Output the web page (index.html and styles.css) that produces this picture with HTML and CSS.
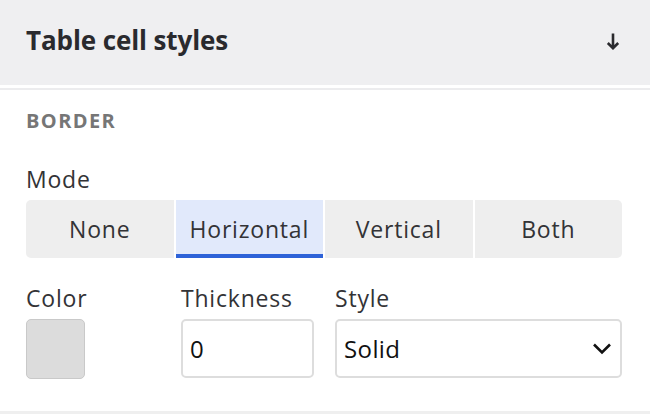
FILE: index.html
```html
<!DOCTYPE html>
<html>
<head>
<meta charset="utf-8">
<link rel="stylesheet" href="styles.css">
</head>
<body>
<div class="panel">
  <div class="header">
    <div class="title">Table cell styles</div>
    <svg class="arrow" width="14" height="17" viewBox="0 0 14 17"><path d="M7 0.5V15.2M1.8 10L7 15.2L12.2 10" fill="none" stroke="#2a2a2e" stroke-width="2.6"/></svg>
  </div>
  <div class="divider"></div>
  <div class="section">
    <div class="section-title">BORDER</div>
    <div class="label mode-label">Mode</div>
    <div class="segments">
      <div class="seg">None</div>
      <div class="seg active">Horizontal</div>
      <div class="seg">Vertical</div>
      <div class="seg">Both</div>
    </div>
    <div class="fields">
      <div class="field f-color">
        <div class="label">Color</div>
        <div class="swatch"></div>
      </div>
      <div class="field f-thick">
        <div class="label">Thickness</div>
        <div class="input">0</div>
      </div>
      <div class="field f-style">
        <div class="label">Style</div>
        <div class="input select"><span>Solid</span><svg width="20" height="13" viewBox="0 0 20 13"><path d="M2 2.5L10 10.5L18 2.5" fill="none" stroke="#111" stroke-width="2.6"/></svg></div>
      </div>
    </div>
  </div>
  <div class="bottom-line"></div>
</div>
</body>
</html>
```

FILE: styles.css
```css
html, body {
  margin: 0;
  padding: 0;
  background: #ffffff;
}
body {
  font-family: "Open Sans", "Noto Sans", sans-serif;
  color: #333336;
  width: 650px;
  height: 414px;
  overflow: hidden;
}
.panel {
  display: flex;
  flex-direction: column;
  height: 414px;
}
.header {
  height: 85px;
  background: #efeff1;
  display: flex;
  align-items: flex-start;
  justify-content: space-between;
  padding: 24px 30px 0 26px;
  box-sizing: border-box;
}
.title {
  font-size: 26px;
  line-height: 32px;
  font-weight: 700;
  color: #2a2a2e;
  letter-spacing: -0.1px;
}
.arrow {
  display: block;
  margin-top: 9px;
}
.divider {
  margin-top: 3px;
  height: 2px;
  background: #ececee;
}
.section {
  padding: 0 28px 0 26px;
  flex: 1;
}
.section-title {
  font-size: 20px;
  font-weight: 700;
  color: #767676;
  line-height: 26px;
  letter-spacing: 1.4px;
  margin-top: 17.5px;
}
.label {
  font-size: 23px;
  line-height: 28px;
  letter-spacing: 0.8px;
  color: #333336;
}
.mode-label {
  margin-top: 31.5px;
}
.segments {
  display: flex;
  gap: 2px;
  margin-top: 7px;
  height: 58px;
}
.seg {
  flex: 1;
  display: flex;
  align-items: center;
  justify-content: center;
  font-size: 23px;
  letter-spacing: 0.8px;
  color: #333336;
  background: #eeeeee;
  box-sizing: border-box;
}
.seg:first-child {
  border-radius: 5px 0 0 5px;
}
.seg:last-child {
  border-radius: 0 5px 5px 0;
}
.seg.active {
  background: #e1e9fb;
  border-bottom: 4px solid #2d62d8;
  padding-top: 4px;
}
.fields {
  display: flex;
  margin-top: 25.5px;
}
.field {
  display: flex;
  flex-direction: column;
  gap: 7.5px;
}
.f-color {
  width: 155px;
}
.f-thick {
  width: 154px;
}
.f-style {
  flex: 1;
}
.swatch {
  width: 59px;
  height: 60px;
  box-sizing: border-box;
  background: #dcdcdc;
  border: 1.5px solid #c9c9c9;
  border-radius: 5px;
}
.input {
  height: 59px;
  box-sizing: border-box;
  border: 2px solid #dddddd;
  border-radius: 5px;
  font-size: 24px;
  letter-spacing: 0.4px;
  color: #111;
  display: flex;
  align-items: center;
  padding: 0 8px 0 7px;
}
.f-thick .input {
  width: 133px;
}
.select {
  justify-content: space-between;
}
.select svg {
  display: block;
}
.bottom-line {
  height: 3px;
  background: #efefef;
}
```
